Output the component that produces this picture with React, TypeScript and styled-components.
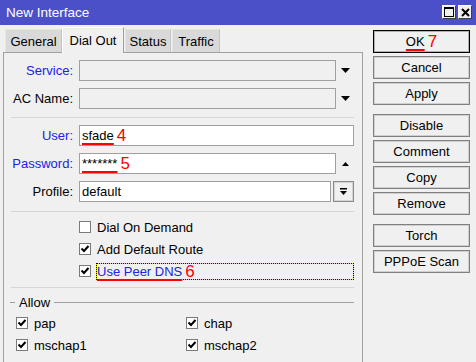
import React from 'react'
import styled, { createGlobalStyle } from 'styled-components'

const GlobalStyle = createGlobalStyle`
    html, body {
        margin: 0;
        padding: 0;
        background: #f0f0f0;
    }
    body {
        font-family: "Liberation Sans", Arial, sans-serif;
        font-size: 13px;
        color: #000;
    }
`

const DownArrow = () => (
    <svg width="9" height="5" viewBox="0 0 9 5"><polygon points="0,0 9,0 4.5,5" fill="#000" /></svg>
)

const UpArrow = () => (
    <svg width="7" height="4" viewBox="0 0 7 4"><polygon points="0,4 7,4 3.5,0" fill="#000" /></svg>
)

const DropIcon = () => (
    <svg width="7" height="7" viewBox="0 0 7 7">
        <rect x="0" y="0" width="7" height="1.5" fill="#000" />
        <polygon points="0,3 7,3 3.5,7" fill="#000" />
    </svg>
)

const CheckMark = () => (
    <svg width="10" height="10" viewBox="0 0 10 10">
        <path d="M1.5 4.5 L4 7 L8.5 2" stroke="#000" strokeWidth="2" fill="none" />
    </svg>
)

interface ICheckProps {
    label: React.ReactNode
    checked?: boolean
    focused?: boolean
    accent?: boolean
}

const Check = ({ label, checked = false, focused = false, accent = false }: ICheckProps) => (
    <CheckRow>
        <CheckBox>{checked && <CheckMark />}</CheckBox>
        <CheckText $focused={focused} $accent={accent}>{label}</CheckText>
    </CheckRow>
)

export default function App() {
    return (
        <>
            <GlobalStyle />
            <Window>
                <TitleBar>
                    <Title>New Interface</Title>
                    <TitleButtons>
                        <WinButton>
                            <svg width="10" height="10" viewBox="0 0 10 10">
                                <rect x="0.5" y="0.5" width="9" height="9" stroke="#000" fill="none" />
                                <rect x="0" y="0" width="10" height="2" fill="#000" />
                            </svg>
                        </WinButton>
                        <WinButton>
                            <svg width="9" height="9" viewBox="0 0 9 9">
                                <path d="M1 1 L8 8 M8 1 L1 8" stroke="#000" strokeWidth="2" />
                            </svg>
                        </WinButton>
                    </TitleButtons>
                </TitleBar>
                <Body>
                    <Main>
                        <TabStrip>
                            <Tab $w={57}>General</Tab>
                            <Tab $w={62} $active>Dial Out</Tab>
                            <Tab $w={46}>Status</Tab>
                            <Tab $w={48}>Traffic</Tab>
                        </TabStrip>
                        <Panel>
                            <FieldGroup>
                                <FieldRow>
                                    <Label $accent>Service:</Label>
                                    <TextBox $disabled />
                                    <ArrowSlot><DownArrow /></ArrowSlot>
                                </FieldRow>
                                <FieldRow>
                                    <Label>AC Name:</Label>
                                    <TextBox $disabled />
                                    <ArrowSlot><DownArrow /></ArrowSlot>
                                </FieldRow>
                            </FieldGroup>
                            <Separator />
                            <FieldGroup>
                                <FieldRow>
                                    <Label $accent>User:</Label>
                                    <TextBox>
                                        <Marked>sfade</Marked>
                                        <Num>4</Num>
                                    </TextBox>
                                </FieldRow>
                                <FieldRow>
                                    <Label $accent>Password:</Label>
                                    <TextBox>
                                        <Marked>*******</Marked>
                                        <Num>5</Num>
                                    </TextBox>
                                    <ArrowSlot><UpArrow /></ArrowSlot>
                                </FieldRow>
                                <FieldRow>
                                    <Label>Profile:</Label>
                                    <TextBox>default</TextBox>
                                    <SmallButton><DropIcon /></SmallButton>
                                </FieldRow>
                            </FieldGroup>
                            <Separator $top={9} />
                            <CheckList>
                                <Check label="Dial On Demand" />
                                <Check label="Add Default Route" checked />
                                <Check
                                    checked
                                    focused
                                    accent
                                    label={<><Marked>Use Peer DNS</Marked><Num>6</Num></>}
                                />
                            </CheckList>
                            <Separator $top={5} />
                            <Legend>
                                <LegendDash />
                                <LegendText>Allow</LegendText>
                                <LegendLine />
                            </Legend>
                            <AllowGrid>
                                <Check label="pap" checked />
                                <Check label="chap" checked />
                                <Check label="mschap1" checked />
                                <Check label="mschap2" checked />
                            </AllowGrid>
                        </Panel>
                    </Main>
                    <Side>
                        <ButtonGroup>
                            <Btn $default>
                                <Marked>OK</Marked>
                                <Num>7</Num>
                            </Btn>
                            <Btn>Cancel</Btn>
                            <Btn>Apply</Btn>
                        </ButtonGroup>
                        <ButtonGroup>
                            <Btn>Disable</Btn>
                            <Btn>Comment</Btn>
                            <Btn>Copy</Btn>
                            <Btn>Remove</Btn>
                        </ButtonGroup>
                        <ButtonGroup>
                            <Btn>Torch</Btn>
                            <Btn>PPPoE Scan</Btn>
                        </ButtonGroup>
                    </Side>
                </Body>
            </Window>
        </>
    )
}

const Window = styled.div`
    width: 476px;
    height: 362px;
    overflow: hidden;
    display: flex;
    flex-direction: column;
    background: #f0f0f0;
`

const TitleBar = styled.div`
    height: 25px;
    flex: none;
    box-sizing: border-box;
    background: #4c50c8;
    color: #fff;
    display: flex;
    align-items: center;
    justify-content: space-between;
    padding: 0 4px 0 6px;
`

const Title = styled.span`
    font-size: 13.5px;
    line-height: 1;
`

const TitleButtons = styled.div`
    display: flex;
    gap: 2px;
    align-self: flex-start;
    margin-top: 5px;
`

const WinButton = styled.div`
    width: 14px;
    height: 14px;
    box-sizing: border-box;
    background: #f0f0f0;
    border: 1px solid;
    border-color: #fff #404040 #404040 #fff;
    display: flex;
    align-items: center;
    justify-content: center;
`

const Body = styled.div`
    display: flex;
    flex: 1;
    min-height: 0;
`

const Main = styled.div`
    width: 360px;
    margin-left: 3px;
    display: flex;
    flex-direction: column;
`

const TabStrip = styled.div`
    display: flex;
    align-items: flex-end;
    gap: 1px;
    height: 25px;
    margin-top: 2px;
    padding-left: 2px;
    position: relative;
    z-index: 1;
`

const Tab = styled.div<{ $active?: boolean; $w: number }>`
    width: ${({ $w }) => $w}px;
    height: ${({ $active }) => ($active ? 26 : 23)}px;
    margin-bottom: ${({ $active }) => ($active ? -1 : 0)}px;
    margin-left: ${({ $active }) => ($active ? -1 : 0)}px;
    box-sizing: border-box;
    display: flex;
    align-items: center;
    justify-content: center;
    background: ${({ $active }) => ($active ? '#f0f0f0' : '#d9d9d9')};
    border: 1px solid ${({ $active }) => ($active ? '#ffffff' : '#e4e4e4')};
    border-right-color: ${({ $active }) => ($active ? '#a0a0a0' : '#c4c4c4')};
    border-bottom: none;
    padding-bottom: ${({ $active }) => ($active ? 1 : 0)}px;
    white-space: nowrap;
`

const Panel = styled.div`
    flex: 1;
    border: 1px solid #a0a0a0;
    border-bottom: none;
    background: #f0f0f0;
    padding: 7px 8px 0 0;
    display: flex;
    flex-direction: column;
`

const FieldGroup = styled.div`
    display: flex;
    flex-direction: column;
    gap: 7px;
`

const FieldRow = styled.div`
    display: flex;
    align-items: center;
    height: 21px;
`

const Label = styled.div<{ $accent?: boolean }>`
    width: 69px;
    flex: none;
    margin-right: 6px;
    text-align: right;
    white-space: nowrap;
    color: ${({ $accent }) => ($accent ? '#2020e8' : '#000')};
`

const TextBox = styled.div<{ $disabled?: boolean }>`
    flex: 1;
    min-width: 0;
    height: 21px;
    box-sizing: border-box;
    border: 1px solid #a0a0a0;
    background: ${({ $disabled }) => ($disabled ? '#f0f0f0' : '#ffffff')};
    display: flex;
    align-items: center;
    padding-left: 2px;
    white-space: nowrap;
`

const ArrowSlot = styled.div`
    width: 18px;
    flex: none;
    display: flex;
    align-items: center;
    justify-content: center;
`

const SmallButton = styled.div`
    width: 21px;
    height: 21px;
    flex: none;
    margin-left: 2px;
    box-sizing: border-box;
    border: 1px solid #8a8a8a;
    box-shadow: inset 0 0 0 1px #d4d4d4;
    display: flex;
    align-items: center;
    justify-content: center;
`

const Marked = styled.span`
    text-decoration-line: underline;
    text-decoration-color: #ff0000;
    text-decoration-thickness: 2px;
    text-underline-offset: 3px;
`

const Num = styled.span`
    color: #ff0000;
    font-size: 17px;
    line-height: 1;
    margin-left: 3px;
`

const Separator = styled.div<{ $top?: number }>`
    height: 1px;
    flex: none;
    background: #d6d6d6;
    margin: ${({ $top = 8 }) => $top}px 0 7px 7px;
`

const CheckList = styled.div`
    display: flex;
    flex-direction: column;
    padding-left: 75px;
    margin-top: -3px;
`

const CheckRow = styled.div`
    display: flex;
    align-items: center;
    height: 22px;
    gap: 5px;
`

const CheckBox = styled.div`
    width: 12px;
    height: 12px;
    flex: none;
    box-sizing: border-box;
    border: 1px solid #7a7a7a;
    background: #fff;
    display: flex;
    align-items: center;
    justify-content: center;
`

const CheckText = styled.div<{ $focused?: boolean; $accent?: boolean }>`
    flex: 1;
    height: 17px;
    box-sizing: border-box;
    display: flex;
    align-items: center;
    white-space: nowrap;
    color: ${({ $accent }) => ($accent ? '#2020e8' : '#000')};
    border: 1px ${({ $focused }) => ($focused ? 'dotted #000' : 'solid transparent')};
    background: ${({ $focused }) =>
        $focused ? 'linear-gradient(#f0f0f0, #f0f0f0) padding-box, #e8e800 border-box' : 'transparent'};
`

const Legend = styled.div`
    display: flex;
    align-items: center;
    height: 16px;
    margin-top: -1px;
`

const LegendDash = styled.div`
    width: 5px;
    height: 1px;
    margin-left: 6px;
    background: #a0a0a0;
`

const LegendText = styled.span`
    margin: 0 4px;
`

const LegendLine = styled.div`
    flex: 1;
    height: 1px;
    background: #a0a0a0;
`

const AllowGrid = styled.div`
    display: grid;
    grid-template-columns: 170px 1fr;
    padding-left: 12px;
    margin-top: 2px;
`

const Side = styled.div`
    width: 97px;
    margin-left: 10px;
    padding-top: 5px;
    display: flex;
    flex-direction: column;
    gap: 9px;
`

const ButtonGroup = styled.div`
    display: flex;
    flex-direction: column;
    gap: 3px;
`

const Btn = styled.div<{ $default?: boolean }>`
    height: 23px;
    box-sizing: border-box;
    border: 1px solid ${({ $default }) => ($default ? '#000' : '#808080')};
    box-shadow: inset 0 0 0 1px ${({ $default }) => ($default ? '#b0b0b0' : '#d0d0d0')};
    background: #f0f0f0;
    display: flex;
    align-items: center;
    justify-content: center;
    white-space: nowrap;
`
